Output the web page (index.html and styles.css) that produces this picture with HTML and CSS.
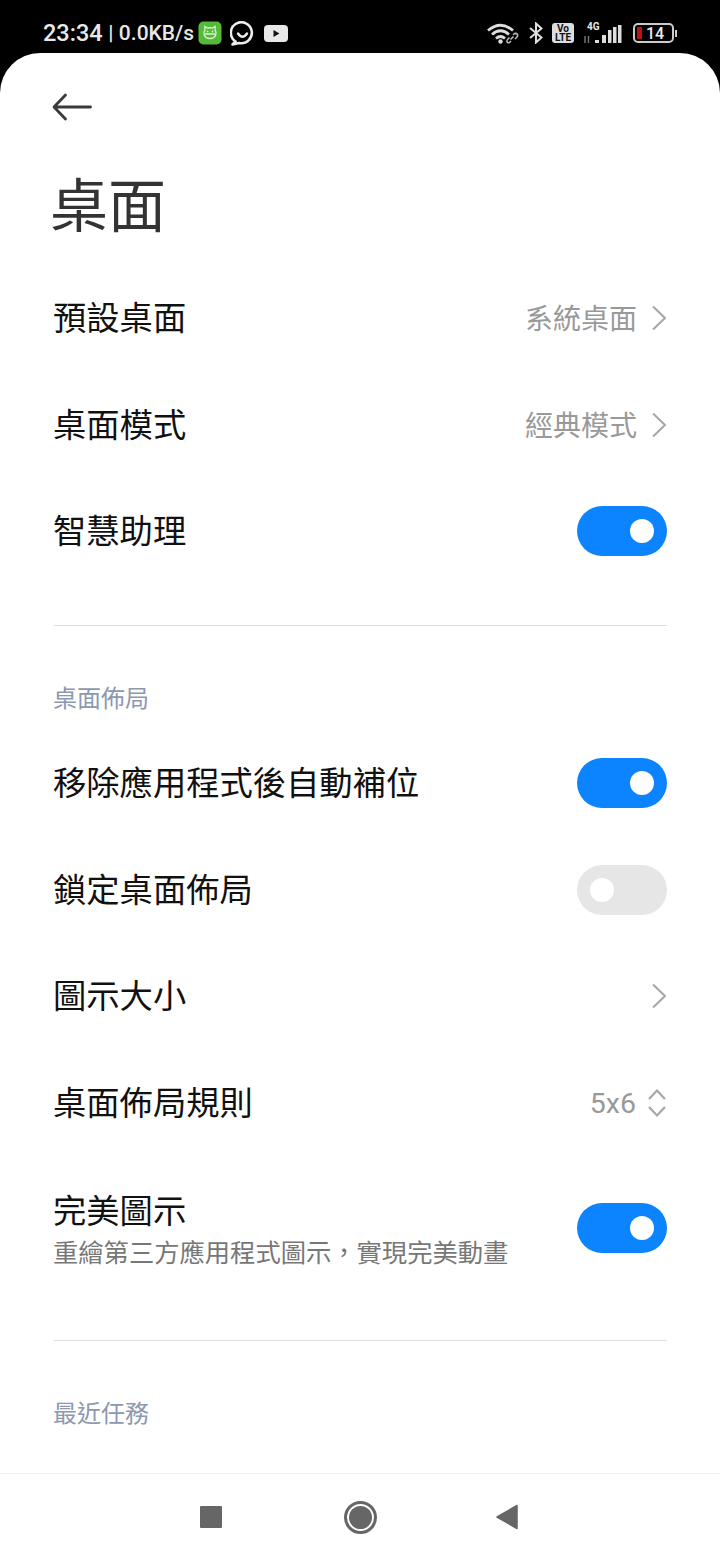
FILE: index.html
```html
<!DOCTYPE html>
<html lang="zh-Hant">

<head>
    <meta charset="UTF-8">
    <meta name="viewport" content="width=device-width, initial-scale=1.0">
    <title>桌面</title>
    <link rel="stylesheet" href="styles.css">
</head>

<body>
    <div class="statusBar">
        <div class="statusLeft">
            <span class="clock">23:34</span>
            <span class="speedSep">|</span>
            <span class="speed">0.0KB/s</span>
            <svg class="appIcon" width="24" height="24" viewBox="0 0 24 24">
                <rect x="0.5" y="0.5" width="23" height="23" rx="5" fill="#55b93a" />
                <path d="M7 9 L6.8 5.5 L9.5 7 Q12 6.5 14.5 7 L17.2 5.5 L17 9 Q18.5 11 17.8 13.5 Q16.8 17.5 12 17.5 Q7.2 17.5 6.2 13.5 Q5.5 11 7 9 Z M7 13 H17" fill="none" stroke="#d8f3cd" stroke-width="1.3" />
                <circle cx="9.5" cy="10.5" r="1" fill="#d8f3cd" />
                <circle cx="14.5" cy="10.5" r="1" fill="#d8f3cd" />
            </svg>
            <svg class="chatIcon" width="25" height="25" viewBox="0 0 25 25">
                <path d="M5.5 20.5 A10.5 10.5 0 1 1 9 22 L2.5 23.5 Z" fill="none" stroke="#eee" stroke-width="2.6" stroke-linejoin="round" />
                <path d="M8 12.5 Q12.5 19 17 12.5" fill="none" stroke="#eee" stroke-width="2.4" stroke-linecap="round" />
            </svg>
            <svg class="ytIcon" width="24" height="17" viewBox="0 0 24 17">
                <rect width="24" height="17" rx="4" fill="#e8e8e8" />
                <path d="M9.5 5 L15.5 8.5 L9.5 12 Z" fill="#111" />
            </svg>
        </div>
        <div class="statusRight">
            <svg class="wifiIcon" width="32" height="21" viewBox="0 0 32 21">
                <path d="M1 7.5 Q13.5 -3 26 7.5 M5 11.5 Q13.5 4 22 11.5 M9 15.5 Q13.5 11.5 18 15.5" fill="none" stroke="#ddd" stroke-width="2.8" />
                <circle cx="13.5" cy="18.5" r="2.2" fill="#ddd" />
                <path d="M23.5 16.5 L26.5 13.5 M24 18 L22.5 19.5 Q20.5 20.5 20 18.5 Q19.5 17.5 21 16 L22.5 14.5 M26 12 L27.5 10.5 Q29.5 10 30.5 11.5 Q31 13 29.5 14.5 L28 16" fill="none" stroke="#bbb" stroke-width="1.5" />
            </svg>
            <svg class="btIcon" width="14" height="22" viewBox="0 0 14 22">
                <path d="M1 6 L12.5 15.5 L7 20.5 L7 1.5 L12.5 6.5 L1 16" fill="none" stroke="#e0e0e0" stroke-width="2" />
            </svg>
            <div class="volte"><span>Vo</span><span>LTE</span></div>
            <div class="signal">
                <span class="netType">4G</span>
                <svg width="39" height="19" viewBox="0 0 39 19">
                    <path d="M2 11 V18 M5.5 11 V18" stroke="#777" stroke-width="1.4" />
                    <rect x="12" y="15" width="4" height="3" fill="#ddd" />
                    <rect x="19" y="10" width="4" height="8" fill="#ddd" />
                    <rect x="25" y="5" width="3.5" height="13" fill="#ddd" />
                    <rect x="30" y="2" width="3.5" height="16" fill="#ddd" />
                    <rect x="35" y="0" width="3.5" height="18" fill="#ddd" />
                </svg>
            </div>
            <div class="battery">
                <div class="batteryBody">
                    <i class="batteryLevel"></i>
                    <span>14</span>
                </div>
                <i class="batteryTip"></i>
            </div>
        </div>
    </div>

    <div class="sheet">
        <div class="content">
            <div class="backRow">
                <svg width="40" height="30" viewBox="0 0 40 30">
                    <path d="M38.5 15 H2.5 M13.5 3 L2 15 L13.5 27" fill="none" stroke="#3a3a3a" stroke-width="2.8" stroke-linecap="round" stroke-linejoin="round" />
                </svg>
            </div>
            <h1 class="pageTitle">桌面</h1>

            <div class="row">
                <span class="rowTitle">預設桌面</span>
                <div class="rowEnd">
                    <span class="rowValue">系統桌面</span>
                    <svg class="chevron" width="16" height="26" viewBox="0 0 16 26">
                        <path d="M2 1.5 L14 13 L2 24.5" fill="none" stroke="#a6a6a6" stroke-width="2" />
                    </svg>
                </div>
            </div>
            <div class="row">
                <span class="rowTitle">桌面模式</span>
                <div class="rowEnd">
                    <span class="rowValue">經典模式</span>
                    <svg class="chevron" width="16" height="26" viewBox="0 0 16 26">
                        <path d="M2 1.5 L14 13 L2 24.5" fill="none" stroke="#a6a6a6" stroke-width="2" />
                    </svg>
                </div>
            </div>
            <div class="row">
                <span class="rowTitle">智慧助理</span>
                <div class="toggle on"><i></i></div>
            </div>

            <div class="divider"></div>
            <div class="sectionLabel">桌面佈局</div>

            <div class="row">
                <span class="rowTitle">移除應用程式後自動補位</span>
                <div class="toggle on"><i></i></div>
            </div>
            <div class="row">
                <span class="rowTitle">鎖定桌面佈局</span>
                <div class="toggle"><i></i></div>
            </div>
            <div class="row">
                <span class="rowTitle">圖示大小</span>
                <div class="rowEnd">
                    <svg class="chevron" width="16" height="26" viewBox="0 0 16 26">
                        <path d="M2 1.5 L14 13 L2 24.5" fill="none" stroke="#a6a6a6" stroke-width="2" />
                    </svg>
                </div>
            </div>
            <div class="row">
                <span class="rowTitle">桌面佈局規則</span>
                <div class="rowEnd">
                    <span class="rowValue latin">5x6</span>
                    <svg class="updown" width="20" height="30" viewBox="0 0 20 30">
                        <path d="M2 11 L10 2.5 L18 11 M2 19 L10 27.5 L18 19" fill="none" stroke="#a6a6a6" stroke-width="2.2" />
                    </svg>
                </div>
            </div>
            <div class="row tall">
                <div class="rowText">
                    <span class="rowTitle">完美圖示</span>
                    <span class="rowSub">重繪第三方應用程式圖示，實現完美動畫</span>
                </div>
                <div class="toggle on"><i></i></div>
            </div>

            <div class="divider"></div>
            <div class="sectionLabel">最近任務</div>
        </div>

        <div class="navBar">
            <i class="navSquare"></i>
            <i class="navCircle"><b></b></i>
            <svg width="24" height="26" viewBox="0 0 24 26">
                <path d="M22 1.5 V24.5 L2 13 Z" fill="#666" stroke="#666" stroke-width="1.5" stroke-linejoin="round" />
            </svg>
        </div>
    </div>
</body>

</html>
```

FILE: styles.css
```css
* {
    box-sizing: border-box;
}

body {
    margin: 0;
    width: 720px;
    height: 1560px;
    overflow: hidden;
    display: flex;
    flex-direction: column;
    background-color: #000;
    font-family: 'Noto Sans CJK TC', 'Roboto', sans-serif;
}

.statusBar {
    height: 53px;
    padding: 13px 43px 0;
    display: flex;
    justify-content: space-between;
    align-items: center;
    color: #e8e8e8;
    font-family: 'Roboto', sans-serif;
}

.statusLeft,
.statusRight {
    display: flex;
    align-items: center;
}

.clock {
    font-size: 23.5px;
    font-weight: 500;
}

.speed {
    font-size: 21px;
    font-weight: 500;
}

.speedSep {
    margin: 0 5.5px;
    font-size: 21px;
    font-weight: 500;
}

.appIcon {
    margin-left: 4px;
}

.chatIcon {
    margin-left: 8px;
}

.ytIcon {
    margin-left: 9px;
}

.btIcon {
    margin-left: 10px;
}

.volte {
    width: 22px;
    height: 20px;
    margin-left: 9px;
    border-radius: 3px;
    background-color: #ddd;
    color: #111;
    display: flex;
    flex-direction: column;
    align-items: center;
    font-size: 10px;
    font-weight: 700;
    line-height: 9px;
    padding-top: 1px;
}

.signal {
    position: relative;
    width: 39px;
    height: 21px;
    margin-left: 9px;
    display: flex;
    align-items: flex-end;
}

.netType {
    position: absolute;
    left: 4px;
    top: -2px;
    font-size: 10px;
    line-height: 11px;
    font-weight: 700;
}

.battery {
    display: flex;
    align-items: center;
    margin-left: 11px;
}

.batteryBody {
    width: 41px;
    height: 20px;
    padding: 0 2px;
    border: 2px solid #ccc;
    border-radius: 5px;
    display: flex;
    align-items: center;
    gap: 4px;
    font-size: 16px;
    font-weight: 500;
    color: #eee;
}

.batteryLevel {
    width: 5px;
    height: 12px;
    border-radius: 1px;
    background-color: #c01010;
}

.batteryTip {
    width: 2px;
    height: 7px;
    margin-left: 1px;
    background-color: #ccc;
}

.sheet {
    flex: 1;
    display: flex;
    flex-direction: column;
    background-color: #fff;
    border-radius: 40px 40px 0 0;
    overflow: hidden;
}

.content {
    flex: 1;
    padding: 0 53px 0 54px;
}

.backRow {
    height: 54px;
    padding-top: 54px;
    margin-left: -2px;
    display: flex;
    align-items: center;
}

.pageTitle {
    margin: 0 0 0 -4px;
    height: 158px;
    padding-top: 55px;
    font-size: 58px;
    font-weight: 400;
    line-height: 80px;
    color: #333;
}

.row {
    height: 106.5px;
    display: flex;
    justify-content: space-between;
    align-items: center;
}

.row.tall {
    height: 143.5px;
}

.rowTitle {
    margin-left: -1px;
    margin-bottom: 4px;
    font-size: 33.3px;
    line-height: 40px;
    color: #111;
}

.rowEnd {
    display: flex;
    align-items: center;
    gap: 15px;
}

.rowValue {
    margin-bottom: 2px;
    font-size: 28px;
    color: #999;
}

.rowValue.latin {
    margin-bottom: 0;
    margin-top: 2px;
    font-size: 28.5px;
    font-family: 'Roboto', sans-serif;
}

.chevron {
    margin-left: -1px;
}

.updown {
    margin-left: -4px;
}

.rowText {
    display: flex;
    flex-direction: column;
}

.rowText .rowTitle {
    margin-bottom: 0;
}

.rowSub {
    margin-left: -1px;
    margin-top: 7px;
    font-size: 25.3px;
    line-height: 30px;
    color: #777;
}

.toggle {
    width: 90px;
    height: 50px;
    border-radius: 25px;
    padding: 13px;
    background-color: #e6e6e6;
    display: flex;
}

.toggle i {
    width: 24px;
    height: 24px;
    border-radius: 50%;
    background-color: #fff;
}

.toggle.on {
    background-color: #0d84ff;
    justify-content: flex-end;
}

.divider {
    height: 1px;
    margin-top: 40px;
    background-color: #ddd;
}

.sectionLabel {
    height: 104.5px;
    margin-left: -1px;
    padding-top: 53px;
    font-size: 24px;
    line-height: 36px;
    color: #8c98b0;
}

.navBar {
    height: 87px;
    border-top: 1px solid #eee;
    padding: 0 201px 0 199px;
    display: flex;
    justify-content: space-between;
    align-items: center;
}

.navSquare {
    width: 22px;
    height: 22px;
    border-radius: 1px;
    background-color: #666;
    margin-left: 1px;
}

.navCircle {
    width: 33px;
    height: 33px;
    margin-left: 3px;
    border: 3px solid #666;
    border-radius: 50%;
    padding: 2px;
    display: flex;
}

.navCircle b {
    flex: 1;
    border-radius: 50%;
    background-color: #666;
}
```
